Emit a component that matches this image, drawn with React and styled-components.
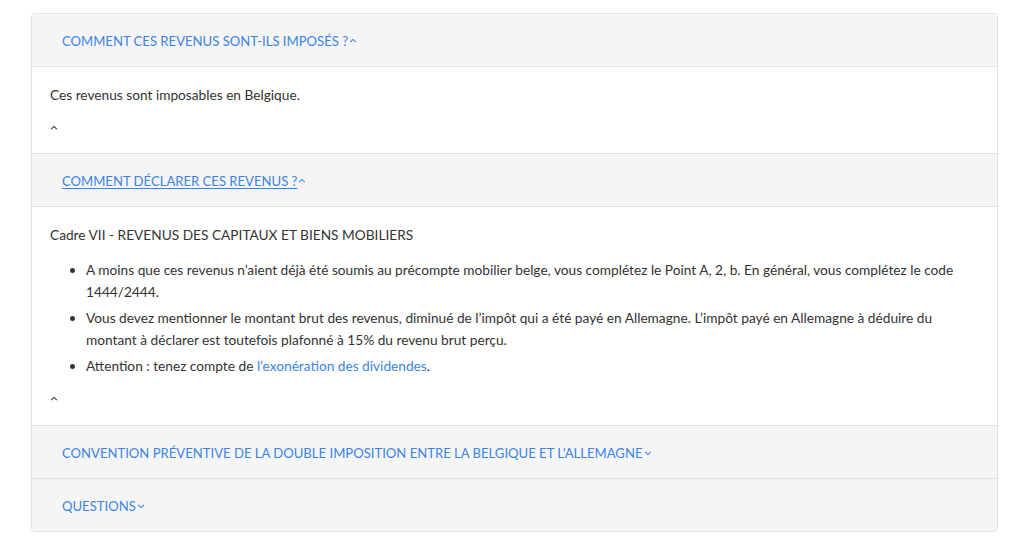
import React from "react";
import styled, { createGlobalStyle } from "styled-components";

const GlobalStyle = createGlobalStyle`
  body {
    margin: 0;
    background: #ffffff;
    font-family: Lato, "Open Sans", sans-serif;
    color: #333333;
  }
`;

const Page = styled.div`
  padding: 13px 26px 18px 31px;
`;

const Accordion = styled.div`
  border: 1px solid #e3e3e3;
  border-radius: 4px;
  overflow: hidden;
`;

const Header = styled.div`
  display: flex;
  align-items: center;
  height: 51px;
  padding: 1px 30px 0;
  background: #f5f5f5;
  border-bottom: 1px solid #e3e3e3;
  &:last-child {
    border-bottom: none;
  }
`;

const Title = styled.a`
  display: flex;
  align-items: center;
  gap: 1px;
  font-size: 13.1px;
  line-height: 16px;
  color: #3b84e6;
  text-transform: uppercase;
  text-decoration: none;
  cursor: pointer;
`;

const Label = styled.span`
  text-decoration: ${({ $active }) => ($active ? "underline" : "none")};
  text-underline-offset: 2px;
`;

const Body = styled.div`
  padding: 17px 18px ${({ $bottom }) => $bottom}px;
  font-size: 13.7px;
  line-height: 22px;
  border-bottom: 1px solid #e3e3e3;
`;

const Para = styled.p`
  margin: 0 0 ${({ $gap }) => $gap}px;
`;

const List = styled.ul`
  margin: 0 0 11px;
  padding-left: 36px;
`;

const Item = styled.li`
  margin-bottom: 4px;
  &:last-child {
    margin-bottom: 0;
  }
`;

const Link = styled.a`
  color: #3b84e6;
  text-decoration: none;
`;

const CaretRow = styled.div`
  height: 22px;
  display: flex;
  align-items: center;
`;

const Chevron = ({ up, size = 8, color = "#3b84e6" }) => (
  <svg width={size} height={size} viewBox="0 0 10 10">
    <polyline
      points={up ? "1.5,6.5 5,3 8.5,6.5" : "1.5,3.5 5,7 8.5,3.5"}
      fill="none"
      stroke={color}
      strokeWidth="1.3"
    />
  </svg>
);

const Section = ({ title, open, active }) => (
  <Header>
    <Title>
      <Label $active={active}>{title}</Label>
      <Chevron up={open} />
    </Title>
  </Header>
);

const App = () => (
  <>
    <GlobalStyle />
    <Page>
      <Accordion>
        <Section title="Comment ces revenus sont-ils imposés ?" open />
        <Body $bottom={14}>
          <Para $gap={11}>Ces revenus sont imposables en Belgique.</Para>
          <CaretRow>
            <Chevron up color="#333" />
          </CaretRow>
        </Body>
        <Section title="Comment déclarer ces revenus ?" open active />
        <Body $bottom={15}>
          <Para $gap={13}>Cadre VII - REVENUS DES CAPITAUX ET BIENS MOBILIERS</Para>
          <List>
            <Item>
              A moins que ces revenus n’aient déjà été soumis au précompte mobilier belge, vous
              complétez le Point A, 2, b. En général, vous complétez le code 1444/2444.
            </Item>
            <Item>
              Vous devez mentionner le montant brut des revenus, diminué de l’impôt qui a été payé
              en Allemagne. L’impôt payé en Allemagne à déduire du montant à déclarer est toutefois
              plafonné à 15% du revenu brut perçu.
            </Item>
            <Item>
              Attention : tenez compte de <Link>l’exonération des dividendes</Link>.
            </Item>
          </List>
          <CaretRow>
            <Chevron up color="#333" />
          </CaretRow>
        </Body>
        <Section title="Convention préventive de la double imposition entre la Belgique et l’Allemagne" />
        <Section title="Questions" />
      </Accordion>
    </Page>
  </>
);

export default App;
